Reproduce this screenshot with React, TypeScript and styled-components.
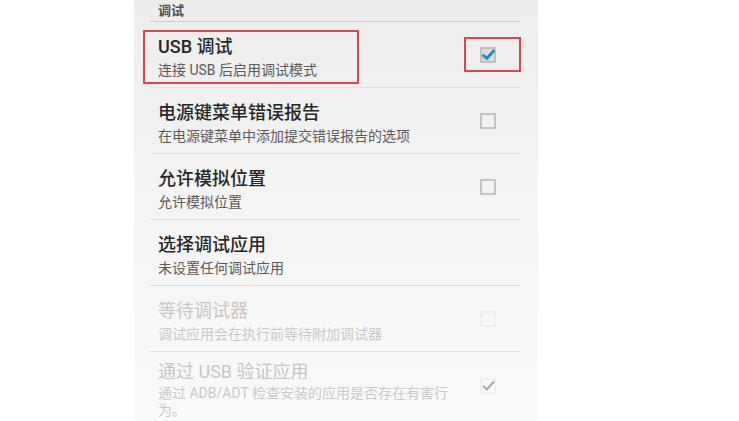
import styled, { createGlobalStyle } from "styled-components";

const GlobalStyle = createGlobalStyle`
  html, body {
    margin: 0;
    padding: 0;
    background: #ffffff;
  }
  body {
    font-family: "Roboto", "Noto Sans CJK SC", sans-serif;
  }
`;

const Page = styled.div`
  width: 739px;
  height: 421px;
  overflow: hidden;
  background: #ffffff;
`;

const Panel = styled.div`
  margin-left: 134px;
  width: 404px;
  height: 421px;
  background: linear-gradient(#ededed, #f4f4f4 50%, #fafafa);
  padding: 0 18px 0 16px;
  box-sizing: border-box;
`;

const Category = styled.div`
  height: 22px;
  padding-left: 8px;
  border-bottom: 1px solid #cfcfcf;
  font-size: 13px;
  font-weight: bold;
  line-height: 22px;
  color: #505050;
  box-sizing: border-box;
`;

const Row = styled.div<{ $last?: boolean }>`
  position: relative;
  display: flex;
  min-height: 66px;
  border-bottom: ${(p) => (p.$last ? "none" : "1px solid #e0e0e0")};
  box-sizing: border-box;
`;

const TextBlock = styled.div<{ $last?: boolean }>`
  flex: 1;
  padding: ${(p) => (p.$last ? "9px 0 0 8px" : "14px 0 6px 8px")};
`;

const Title = styled.div<{ $disabled?: boolean }>`
  font-size: 18px;
  line-height: 22px;
  font-weight: ${(p) => (p.$disabled ? 400 : 500)};
  color: ${(p) => (p.$disabled ? "#c6c6c6" : "#262626")};
`;

const Summary = styled.div<{ $disabled?: boolean; $last?: boolean }>`
  margin-top: ${(p) => (p.$last ? 2 : 4)}px;
  font-size: 14px;
  line-height: 17px;
  color: ${(p) => (p.$disabled ? "#c9c9c9" : "#5a5a5a")};
`;

const CheckCell = styled.div`
  position: relative;
  width: 64px;
  display: flex;
  align-items: center;
  justify-content: center;
`;

const Highlight = styled.div<{ $left: number; $top: number; $w: number; $h: number }>`
  position: absolute;
  left: ${(p) => p.$left}px;
  top: ${(p) => p.$top}px;
  width: ${(p) => p.$w}px;
  height: ${(p) => p.$h}px;
  border: 2px solid #d9464f;
  box-sizing: border-box;
  pointer-events: none;
`;

type BoxState = "checked" | "unchecked" | "faint" | "faintChecked";

function CheckBox({ state }: { state: BoxState }) {
  const faint = state === "faint" || state === "faintChecked";
  const checked = state === "checked" || state === "faintChecked";
  return (
    <svg width="20" height="20" viewBox="0 0 20 20">
      <rect
        x="3"
        y="3"
        width="14"
        height="14"
        fill={state === "checked" ? "#dcdcdc" : "none"}
        stroke={faint ? "#ececec" : "#b4b4b4"}
        strokeWidth="1.5"
      />
      {checked && (
        <path
          d="M5.5 10.5 L8.8 13.5 L15.5 6"
          fill="none"
          stroke={faint ? "#a8a8a8" : "#1a8cc4"}
          strokeWidth={faint ? 2 : 2.8}
          strokeLinecap="round"
          strokeLinejoin="round"
        />
      )}
    </svg>
  );
}

interface IPref {
  title: string;
  summary: string;
  box?: BoxState;
  disabled?: boolean;
  marked?: boolean;
}

const prefs: IPref[] = [
  { title: "USB 调试", summary: "连接 USB 后启用调试模式", box: "checked", marked: true },
  { title: "电源键菜单错误报告", summary: "在电源键菜单中添加提交错误报告的选项", box: "unchecked" },
  { title: "允许模拟位置", summary: "允许模拟位置", box: "unchecked" },
  { title: "选择调试应用", summary: "未设置任何调试应用" },
  { title: "等待调试器", summary: "调试应用会在执行前等待附加调试器", box: "faint", disabled: true },
  {
    title: "通过 USB 验证应用",
    summary: "通过 ADB/ADT 检查安装的应用是否存在有害行为。",
    box: "faintChecked",
    disabled: true,
  },
];

function App() {
  return (
    <Page>
      <GlobalStyle />
      <Panel>
        <Category>调试</Category>
        {prefs.map((p, i) => {
          const last = i === prefs.length - 1;
          return (
            <Row key={p.title} $last={last}>
              <TextBlock $last={last}>
                <Title $disabled={p.disabled}>{p.title}</Title>
                <Summary $disabled={p.disabled} $last={last}>
                  {p.summary}
                </Summary>
              </TextBlock>
              <CheckCell>
                {p.box && <CheckBox state={p.box} />}
                {p.marked && <Highlight $left={8} $top={15} $w={57} $h={35} />}
              </CheckCell>
              {p.marked && <Highlight $left={-7} $top={8} $w={216} $h={54} />}
            </Row>
          );
        })}
      </Panel>
    </Page>
  );
}

export default App;
